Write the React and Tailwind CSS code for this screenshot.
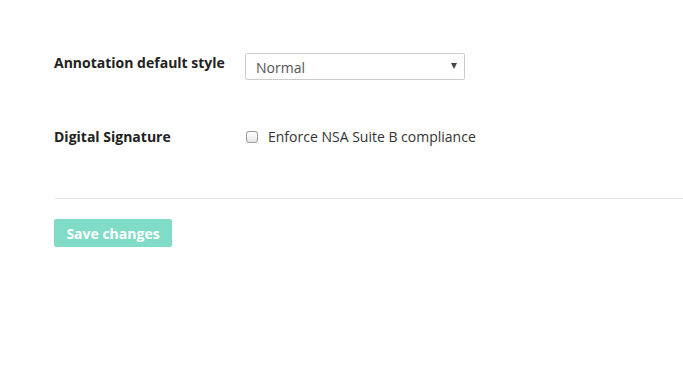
export default function App() {
  return (
    <div className="min-h-[375px] w-[683px] bg-white font-['Open_Sans',sans-serif] text-[#222]">
      <div className="pl-[54px] pt-[53px]">
        <div className="flex items-start">
          <label className="w-[191px] text-[14px] font-bold leading-[20px]">
            Annotation default style
          </label>
          <div className="relative flex h-[27px] w-[220px] items-center rounded-[2px] border border-[#ccc] bg-white pl-[10px] pt-[2px] text-[14px] text-[#555]">
            <span>Normal</span>
            <span className="absolute right-[7px] top-[9px] h-0 w-0 border-x-[3.5px] border-t-[6px] border-x-transparent border-t-[#444]" />
          </div>
        </div>

        <div className="mt-[47px] flex items-center">
          <label className="w-[191px] text-[14px] font-bold leading-[20px]">
            Digital Signature
          </label>
          <div className="flex items-center">
            <span className="ml-[1px] h-[12px] w-[12px] rounded-[3px] border border-[#999] bg-gradient-to-b from-[#fff] to-[#e6e6e6]" />
            <span className="ml-[10px] text-[14px] leading-[20px] text-[#333]">
              Enforce NSA Suite B compliance
            </span>
          </div>
        </div>

        <div className="mt-[51px] h-px bg-[#e5e5e5]" />

        <button className="mt-[20px] flex h-[28px] w-[118px] items-center justify-center rounded-[2px] bg-[#80dcc6] text-[14px] font-bold text-white">
          Save changes
        </button>
      </div>
    </div>
  );
}
